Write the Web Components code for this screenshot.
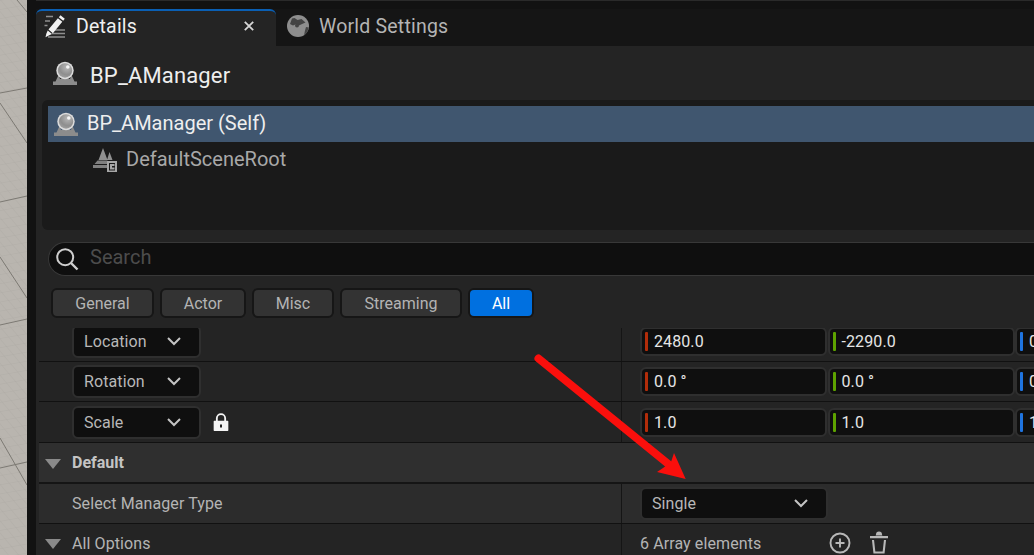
<!DOCTYPE html>
<html>
<head>
<meta charset="utf-8">
<style>
  html, body { margin: 0; height: 100%; background: #121212; overflow: hidden; }
  body { font-family: Roboto, "Liberation Sans", sans-serif; }
</style>
</head>
<body>
<details-shell>
  <ue-tab slot="tabs" active label="Details" icon="pencil" closable></ue-tab>
  <ue-tab slot="tabs" label="World Settings" icon="globe"></ue-tab>

  <actor-title>BP_AManager</actor-title>

  <ue-tree>
    <tree-row selected icon="actor">BP_AManager (Self)</tree-row>
    <tree-row child icon="root">DefaultSceneRoot</tree-row>
  </ue-tree>

  <ue-search placeholder="Search"></ue-search>

  <filter-bar>
    <filter-btn style="width:103px">General</filter-btn>
    <filter-btn style="width:86px">Actor</filter-btn>
    <filter-btn style="width:82px">Misc</filter-btn>
    <filter-btn style="width:122px">Streaming</filter-btn>
    <filter-btn style="width:66px" active>All</filter-btn>
  </filter-bar>

  <prop-list>
    <prop-row first>
      <drop-down slot="name" style="width:129px">Location</drop-down>
      <vec-field value="2480.0" axis="x"></vec-field>
      <vec-field value="-2290.0" axis="y"></vec-field>
      <vec-field value="0.0" axis="z"></vec-field>
    </prop-row>
    <prop-row short>
      <drop-down slot="name" style="width:129px">Rotation</drop-down>
      <vec-field value="0.0 °" axis="x"></vec-field>
      <vec-field value="0.0 °" axis="y"></vec-field>
      <vec-field value="0.0 °" axis="z"></vec-field>
    </prop-row>
    <prop-row>
      <drop-down slot="name" style="width:129px">Scale</drop-down>
      <ue-icon slot="name" name="lock" size="20"></ue-icon>
      <vec-field value="1.0" axis="x"></vec-field>
      <vec-field value="1.0" axis="y"></vec-field>
      <vec-field value="1.0" axis="z"></vec-field>
    </prop-row>
    <prop-section>Default</prop-section>
    <prop-row tall plain>
      <span slot="name">Select Manager Type</span>
      <drop-down style="width:188px" wide>Single</drop-down>
    </prop-row>
    <prop-row plain group>
      <span slot="name">All Options</span>
      <span>6 Array elements</span>
      <ue-icon name="plus" size="24"></ue-icon>
      <ue-icon name="trash" size="24"></ue-icon>
    </prop-row>
  </prop-list>

  <red-arrow></red-arrow>
</details-shell>

<script>
// icon paths, viewBox 0 0 24 24
const ICONS = {
  pencil: `
    <g fill="none" stroke="#8f8f8f" stroke-width="1.3">
      <path d="M3 2.500h7M2 7h5M1.500 11.500h3M12 16h10M9 19.500h13M5 23h17"/>
    </g>
    <path fill="#f2f2f2" d="M17.500 1.200l4.300 3.600-1.600 2-4.400-3.600zM14.900 4.200l4.400 3.600-9.400 11.400-4.400-3.600zM4.700 16.600l4.300 3.500-3.200 1.300-3.300 1.800.8-3.400z"/>`,
  globe: `
    <circle cx="12" cy="12" r="11" fill="#8e8e8e"/>
    <path fill="#444" d="M6 4.500l2.500-.5 3 2 4-1 4 3.500-4.500 2-2 1-2.500-1.500-3.500 1.500-3-1.500z"/>
    <path fill="#444" d="M20 13l2.800.5-1.500 4.500-3.300 3.500 1-5z"/>
    <circle cx="11" cy="11.500" r="2" fill="#444"/>`,
  actor: `
    <defs><radialGradient id="b" cx=".62" cy=".28" r=".85">
      <stop offset="0" stop-color="#b8b8b8"/><stop offset=".6" stop-color="#8e8e8e"/><stop offset="1" stop-color="#a8a8a8"/>
    </radialGradient></defs>
    <path fill="#8c8c8c" d="M5.500 14l-3 6.500H0V24h24v-3.500h-2.500l-3-6.500-1.500 4H7z"/>
    <circle cx="12" cy="9.500" r="8.700" fill="#dcdcdc"/>
    <circle cx="12" cy="9.500" r="7.200" fill="url(#b)"/>
    <circle cx="14.800" cy="6" r="1.800" fill="#f6f6f6"/>`,
  root: `
    <path fill="#909090" d="M10 0l4.500 12h-9zM16.500 4l3 8H14z"/>
    <path fill="#808080" d="M4.500 12.500h10v3.500H1.500zM0 17h14v3H0z"/>
    <path fill="none" stroke="#a6a6a6" stroke-width="2" d="M15 14h8v9.500h-8zM21.500 17h-3.500v3.500h3.500"/>`,
  search: `
    <circle cx="10.200" cy="10.200" r="8" fill="none" stroke="#cfcfcf" stroke-width="2"/>
    <path d="M16 16l6.500 6.500" stroke="#cfcfcf" stroke-width="2.400"/>`,
  lock: `
    <path d="M7 11V7.500a5 5 0 0 1 10 0V11" fill="none" stroke="#f4f4f4" stroke-width="2.200"/>
    <path fill="#f4f4f4" d="M4 10.500h16a.8.8 0 0 1 .8.8V22a.8.8 0 0 1-.8.8H4a.8.8 0 0 1-.8-.8V11.300a.8.8 0 0 1 .8-.8z"/>
    <rect x="10.800" y="15" width="2.400" height="3.600" fill="#222"/>`,
  plus: `
    <circle cx="12" cy="12" r="9.500" fill="none" stroke="#b8b8b8" stroke-width="1.900"/>
    <path d="M12 7.500v9M7.500 12h9" stroke="#b8b8b8" stroke-width="1.900"/>`,
  trash: `
    <path fill="#b8b8b8" d="M9 3.500a3 3 0 0 1 6 0l.4 1H8.600zM3 5h18v2.200H3z"/>
    <path fill="none" stroke="#b8b8b8" stroke-width="2.100" d="M6 9l1.400 12.500h9.200L18 9"/>`
};

class UeIcon extends HTMLElement {
  connectedCallback() {
    const size = this.getAttribute('size') || 24;
    const root = this.shadowRoot || this.attachShadow({ mode: 'open' });
    root.innerHTML = `
      <style>:host { display: inline-flex; flex: none; } svg { display: block; }</style>
      <svg xmlns="http://www.w3.org/2000/svg" width="${size}" height="${size}" viewBox="0 0 24 24">${ICONS[this.getAttribute('name')] || ''}</svg>`;
  }
}

const chevron = `<svg width="14" height="9" viewBox="0 0 14 9" style="display:block;flex:none"><path d="M1 1l6 6 6-6" fill="none" stroke="#c4c4c4" stroke-width="2"/></svg>`;

// tiny helper, every element here is just a template plus a shadow root
function el(tag, html) {
  customElements.define(tag, class extends HTMLElement {
    constructor() {
      super();
      this.attachShadow({ mode: 'open' }).innerHTML = typeof html === 'function' ? html(this) : html;
    }
    connectedCallback() {
      if (typeof html === 'function') this.shadowRoot.innerHTML = html(this);
    }
  });
}

customElements.define('ue-icon', UeIcon);

el('details-shell', `
  <style>
    :host { display: flex; width: 1034px; height: 555px; overflow: hidden; position: relative; background: #121212; }
    .world { width: 27px; flex: none; background: #b9b5af; }
    .world svg { display: block; }
    .gutter { width: 9px; flex: none; background: #121212; }
    .main { flex: 1; min-width: 0; display: flex; flex-direction: column; }
    .edge { height: 1px; flex: none; background: #2a2a2a; }
    .gap { height: 8px; flex: none; }
    .tabs { display: flex; height: 37px; flex: none; background: #151515; }
    .panel { flex: 1; min-height: 0; display: flex; flex-direction: column; background: #242424; }
  </style>
  <div class="world">
    <svg width="27" height="555" viewBox="0 0 27 555">
      <defs><pattern id="g" width="9" height="9" patternUnits="userSpaceOnUse" patternTransform="rotate(-10) skewX(30)">
        <path d="M0 0h9M0 0v9" stroke="#aba7a2" stroke-width=".6" fill="none"/>
      </pattern></defs>
      <rect width="27" height="555" fill="url(#g)"/>
      <g stroke="#7c7973" stroke-width="1" fill="none">
        <path d="M17 0L27 12M0 93L27 88M0 103L27 143M0 202L27 196M0 257L27 298M0 325L27 319M0 438L27 485M0 468L27 462"/>
      </g>
    </svg>
  </div>
  <div class="gutter"></div>
  <div class="main">
    <div class="edge"></div>
    <div class="gap"></div>
    <div class="tabs"><slot name="tabs"></slot></div>
    <div class="panel"><slot></slot></div>
  </div>
`);

el('ue-tab', t => {
  const active = t.hasAttribute('active');
  return `
  <style>
    :host { display: flex; align-items: center; box-sizing: border-box; height: 37px; flex: none;
      font-size: 19.500px; letter-spacing: .2px;
      width: ${active ? '240px' : '190px'};
      padding-left: ${active ? '7px' : '10px'};
      padding-bottom: ${active ? '5px' : '3px'};
      color: ${active ? '#f0f0f0' : '#b4b4b4'};
      background: ${active ? '#242424' : 'transparent'};
      border-radius: ${active ? '6px 6px 0 0' : '0'};
      ${active ? 'border-top: 2px solid #0a5fb4;' : ''}
      position: relative; }
    .label { margin-left: 9px; flex: 1; }
    .close { width: 26px; margin-right: 14px; text-align: center; }
    svg.x { display: block; margin: 0 auto; }
  </style>
  <ue-icon name="${t.getAttribute('icon')}" size="24"></ue-icon>
  <span class="label">${t.getAttribute('label')}</span>
  ${t.hasAttribute('closable') ? '<span class="close"><svg class="x" width="10" height="10" viewBox="0 0 10 10"><path d="M.8.8l8.400 8.400M9.200.8L.8 9.200" stroke="#d6d6d6" stroke-width="1.800"/></svg></span>' : ''}`;
});

el('actor-title', `
  <style>
    :host { display: flex; align-items: center; height: 54px; flex: none; box-sizing: border-box; padding: 4px 0 0 17px;
      font-size: 22px; color: #eeeeee; gap: 13px; letter-spacing: .15px; }
    ue-icon { margin-top: -4px; }
  </style>
  <ue-icon name="actor" size="24"></ue-icon><slot></slot>
`);

el('ue-tree', `
  <style>
    :host { display: block; height: 130px; flex: none; box-sizing: border-box; margin-left: 6px; padding: 6px 0 0 6px;
      background: #1a1a1a; border-radius: 6px 0 0 6px; }
  </style>
  <slot></slot>
`);

el('tree-row', t => {
  const child = t.hasAttribute('child');
  return `
  <style>
    :host { display: flex; align-items: center; height: 36px; box-sizing: border-box;
      padding-left: ${child ? '45px' : '6px'}; gap: 9px;
      font-size: 20px; color: ${child ? '#a8a8a8' : '#eeeeee'};
      background: ${t.hasAttribute('selected') ? '#40566f' : 'transparent'}; }
    span { padding-bottom: 2px; }
  </style>
  <ue-icon name="${t.getAttribute('icon')}" size="24"></ue-icon><span><slot></slot></span>`;
});

el('ue-search', t => `
  <style>
    :host { display: flex; align-items: center; box-sizing: border-box; height: 34px; flex: none;
      margin: 12px 0 0 12px; padding-left: 6px; gap: 11px;
      background: #0f0f0f; border: 1px solid #383838; border-right: 0; border-radius: 17px 0 0 17px;
      font-size: 20px; color: #4c4c4c; }
    span { padding-bottom: 4px; }
  </style>
  <ue-icon name="search" size="24"></ue-icon><span>${t.getAttribute('placeholder') || ''}</span>
`);

el('filter-bar', `
  <style>:host { display: flex; height: 30px; flex: none; margin: 12px 0 0 15px; gap: 6px; }</style>
  <slot></slot>
`);

el('filter-btn', t => {
  const active = t.hasAttribute('active');
  return `
  <style>
    :host { display: flex; align-items: center; justify-content: center; box-sizing: border-box; height: 30px; flex: none;
      font-size: 16px;
      background: ${active ? '#0070e0' : '#333333'};
      color: ${active ? '#ffffff' : '#b4b4b4'};
      border: 2px solid #161616; border-radius: 6px; }
  </style>
  <slot></slot>`;
});

el('prop-list', `
  <style>
    :host { display: block; flex: 1; min-height: 0; overflow: hidden; margin: 10px 0 0 3px; }
  </style>
  <slot></slot>
`);

el('prop-row', t => {
  const tall = t.hasAttribute('tall');
  const first = t.hasAttribute('first');
  const plain = t.hasAttribute('plain');
  const group = t.hasAttribute('group');
  const h = first ? 34 : (tall || t.hasAttribute('short')) ? 40 : 41;
  return `
  <style>
    :host { display: flex; box-sizing: border-box; flex: none; height: ${h}px;
      background: ${plain && !group ? '#2c2c2c' : '#242424'};
      border-bottom: 1px solid #111111;
      font-size: 16px; letter-spacing: .1px; color: #b4b4b4; }
    .name { width: 582px; flex: none; box-sizing: border-box; display: flex; align-items: center;
      padding-left: 33px; gap: 10px; padding-bottom: ${first ? '6px' : group ? '2px' : '0'}; position: relative; }
    .tri { position: absolute; left: 6px; top: 50%; margin-top: -5px; }
    .vals { flex: 1; min-width: 0; display: flex; align-items: center; gap: .5px;
      border-left: 1px solid #151515; padding-left: 18px; padding-bottom: ${first ? '6px' : group ? '2px' : '0'}; overflow: hidden; }
    .vals ::slotted(ue-icon[name=plus]) { margin-left: 66.500px; }
    .vals ::slotted(ue-icon[name=trash]) { margin-left: 14.500px; }
  </style>
  <div class="name">
    ${group ? '<svg class="tri" width="16" height="10" viewBox="0 0 16 10"><path d="M0 0h16L8 10z" fill="#8a8a8a"/></svg>' : ''}
    <slot name="name"></slot>
  </div>
  <div class="vals"><slot></slot></div>`;
});

el('prop-section', `
  <style>
    :host { display: flex; align-items: center; box-sizing: border-box; height: 41px; flex: none; position: relative;
      padding-left: 33px; background: #2f2f2f; border-bottom: 2px solid #151515;
      font-size: 16px; font-weight: 700; color: #c4c4c4; }
    svg { position: absolute; left: 6px; top: 50%; margin-top: -4px; }
  </style>
  <svg width="16" height="10" viewBox="0 0 16 10"><path d="M0 0h16L8 10z" fill="#8a8a8a"/></svg>
  <slot></slot>
`);

el('drop-down', `
  <style>
    :host { display: flex; align-items: center; justify-content: space-between; box-sizing: border-box; height: 33px; flex: none;
      padding: 0 18px 0 10px;
      background: #0f0f0f; border: 2px solid #2f2f2f; border-radius: 6px;
      font-size: 16px; color: #b8b8b8; }
  </style>
  <slot></slot>${chevron}
`);

const AXIS = { x: '#b32d0a', y: '#5ea300', z: '#1f74e0' };
el('vec-field', t => `
  <style>
    :host { display: flex; align-items: center; box-sizing: border-box; width: 187px; height: 29px; flex: none; position: relative;
      padding-left: 12px; background: #0f0f0f; border: 2px solid #2f2f2f; border-radius: 6px;
      font-size: 16px; color: #e6e6e6; }
    i { position: absolute; left: 3px; top: 3px; bottom: 3px; width: 3px; border-radius: 1px; background: ${AXIS[t.getAttribute('axis')]}; }
  </style>
  <i></i><span>${t.getAttribute('value')}</span>
`);

el('red-arrow', `
  <style>
    :host { display: block; position: absolute; left: 530px; top: 350px; width: 160px; height: 135px; pointer-events: none; }
    svg { display: block; }
  </style>
  <svg width="160" height="135" viewBox="0 0 160 135">
    <path d="M8.500 8.500L142 117" stroke="#fa0f0c" stroke-width="8" stroke-linecap="round" fill="none"/>
    <path d="M155.700 129L144 103l-3 9-8 6-6 4z" fill="#fa0f0c"/>
  </svg>
`);
</script>
</body>
</html>
